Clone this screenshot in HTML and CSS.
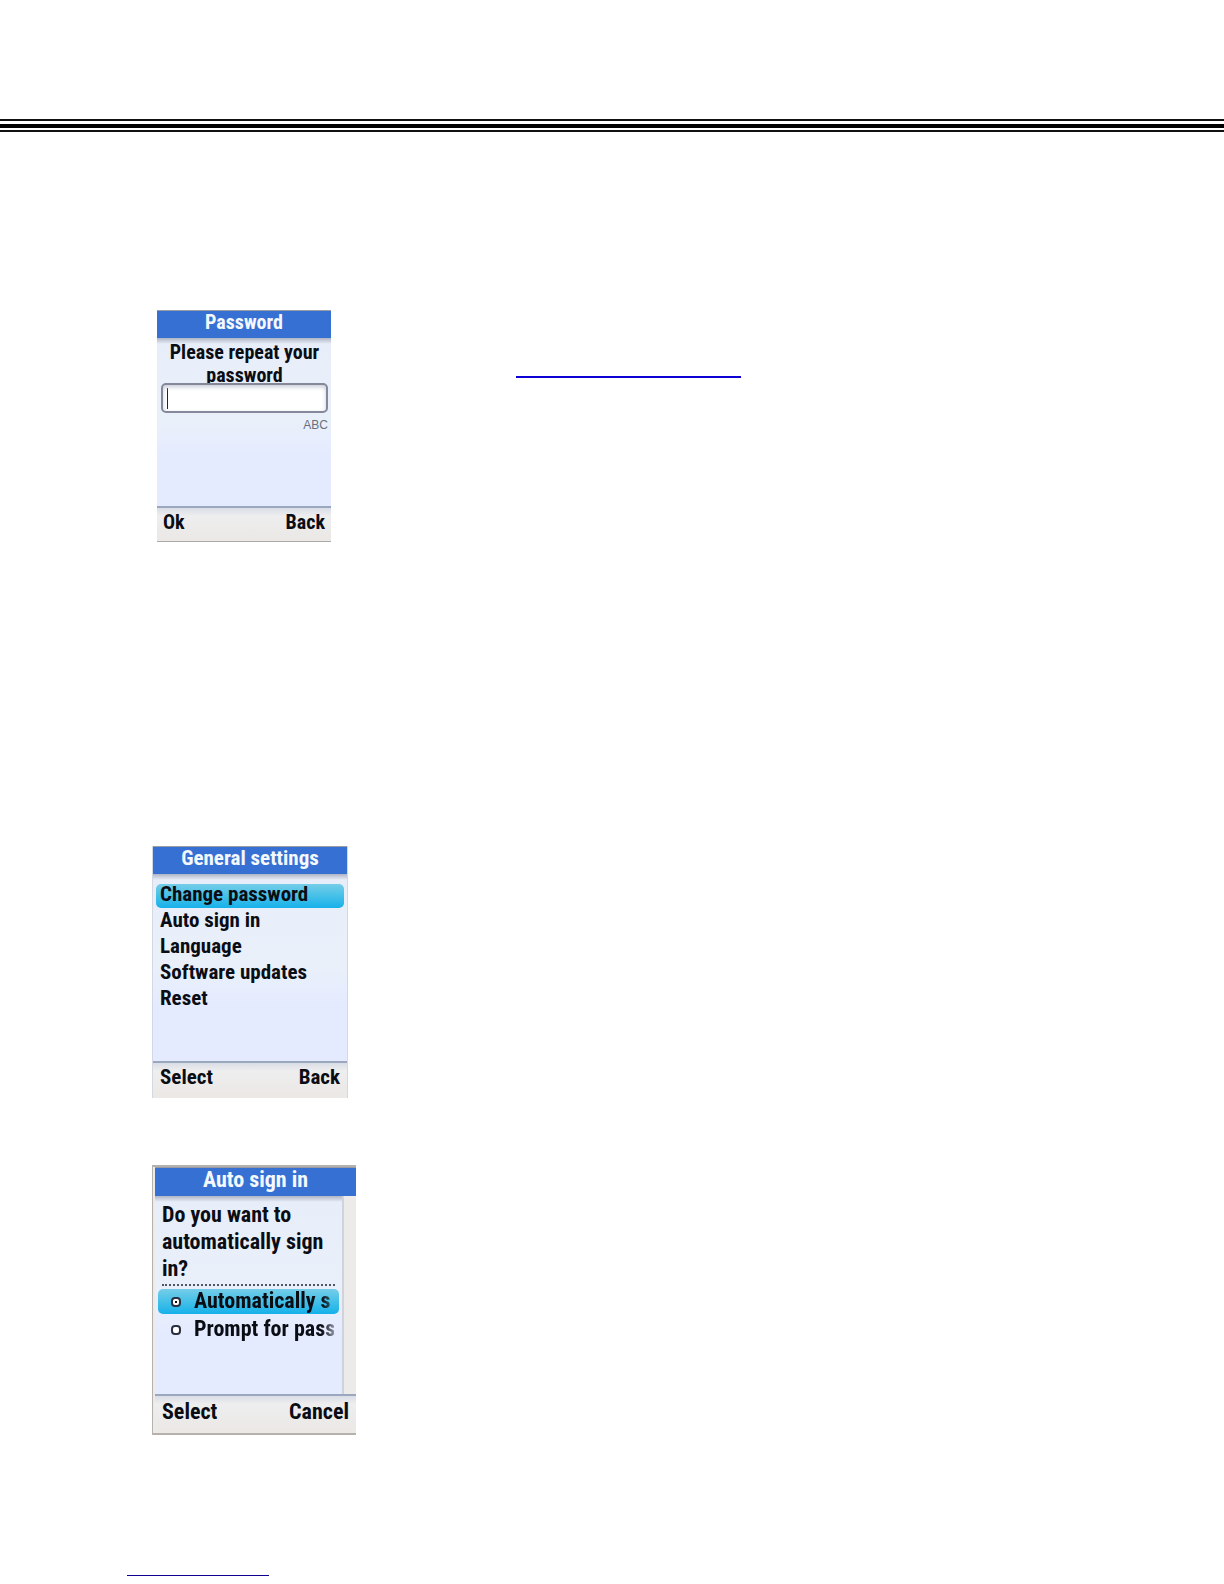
FILE: index.html
```html
<!DOCTYPE html>
<html lang="en">
<head>
<meta charset="utf-8">
<meta name="viewport" content="width=device-width, initial-scale=1">
<title>General settings</title>
<link rel="stylesheet" href="styles.css">
</head>
<body>
<header class="page-rule"></header>
<main class="content">
  <div class="row">
    <section class="phone phone-password">
      <h2 class="title">Password</h2>
      <form class="screen password-form">
        <label class="prompt" for="repeat">Please repeat your password</label>
        <input class="field" id="repeat" type="password">
        <span class="mode">ABC</span>
      </form>
      <footer class="softkeys"><button type="button">Ok</button><button type="button">Back</button></footer>
    </section>
    <a class="link" href="#settings" aria-label="General settings"></a>
  </div>

  <section class="phone phone-settings" id="settings">
    <h2 class="title">General settings</h2>
    <ul class="screen menu">
      <li><button class="selected" type="button">Change password</button></li>
      <li><button type="button">Auto sign in</button></li>
      <li><button type="button">Language</button></li>
      <li><button type="button">Software updates</button></li>
      <li><button type="button">Reset</button></li>
    </ul>
    <footer class="softkeys"><button type="button">Select</button><button type="button">Back</button></footer>
  </section>

  <section class="phone phone-signin">
    <h2 class="title">Auto sign in</h2>
    <form class="screen signin-form">
      <p class="question">Do you want to automatically sign in?</p>
      <label class="option selected"><input type="radio" name="signin" checked><span>Automatically s</span></label>
      <label class="option"><input type="radio" name="signin"><span>Prompt for pass</span></label>
    </form>
    <footer class="softkeys"><button type="button">Select</button><button type="button">Cancel</button></footer>
  </section>
</main>
<footer class="page-footer"><a class="footer-link" href="#top" aria-label="Back to top"></a></footer>
</body>
</html>
```
FILE: styles.css
```css
* { box-sizing: border-box; }

body {
  margin: 0;
  background: #fff;
  color: #0b0d14;
  font-family: "Roboto Condensed", Roboto, "Liberation Sans", sans-serif;
  font-size: 20px;
  font-weight: 700;
}

button {
  padding: 0;
  border: 0;
  background: none;
  color: inherit;
  font: inherit;
}

.page-rule {
  height: 13px;
  margin-top: 119px;
  border-top: 2px solid #111;
  border-bottom: 2px solid #111;
  background: linear-gradient(#000, #000) center / 100% 4px no-repeat;
}

.content { padding: 178px 0 0 152px; }

.row {
  display: flex;
  align-items: flex-start;
  padding-left: 5px;
}

.link {
  width: 225px;
  height: 68px;
  margin-left: 185px;
  border-bottom: 2px solid #0c00d2;
}

.phone {
  display: flex;
  flex-direction: column;
  background: #e5ebff;
}

.title {
  height: 28px;
  margin: 0;
  border-top: 1px solid #9a9da6;
  background: #3670d3;
  color: #f4f8ff;
  font-size: inherit;
  font-weight: inherit;
  line-height: 22px;
  text-align: center;
}

.screen {
  flex: 1;
  margin: 0;
  background: linear-gradient(#aeb5c4, #e8eef9 6px, #e9f0fa 50%, #e5ebff 70%);
}

.softkeys {
  display: flex;
  justify-content: space-between;
  height: 36px;
  padding: 0 7px;
  border-top: 2px solid #9ba7bf;
  background: linear-gradient(#d9dde6, #eeeeef 8px, #ebe8e5);
}

.softkeys button { height: 28px; }

.phone-password {
  width: 174px;
  height: 232px;
}

.password-form {
  display: flex;
  flex-direction: column;
  padding: 3px 3px 0 4px;
}

.prompt {
  line-height: 23px;
  text-align: center;
}

.field {
  width: 100%;
  height: 30px;
  margin-top: -4px;
  border: 2px solid #85879a;
  border-radius: 5px;
  background: linear-gradient(#222, #222) 4px 3px / 1px 21px no-repeat #fff;
  box-shadow: inset 0 2px 4px #c8cad6;
}

.mode {
  align-self: flex-end;
  color: #687080;
  font: 12px/24px "Liberation Sans", sans-serif;
}

.phone-password .softkeys {
  padding: 0 6px;
  border-bottom: 1px solid #aaa;
}

.phone-settings {
  width: 196px;
  height: 252px;
  margin-top: 304px;
  border: solid #d3d8e2;
  border-width: 0 1px;
  font-size: 21px;
}

.menu {
  padding: 8px 3px;
  list-style: none;
}

.menu li { height: 26px; }

.menu button {
  width: 100%;
  height: 24px;
  padding: 0 0 3px 4px;
  border-radius: 5px;
  line-height: 21px;
  text-align: left;
}

.selected { background: linear-gradient(#75cde8, #45c0e8 50%, #16b1ea); }

.phone-settings .softkeys { height: 37px; }

.phone-signin {
  width: 204px;
  height: 270px;
  margin-top: 67px;
  border: solid #b5b1ac;
  border-width: 2px 0 2px 1px;
  padding-left: 2px;
  background: #edebe9;
  font-size: 22px;
}

.phone-signin .title {
  height: 29px;
  line-height: 24px;
}

.signin-form {
  width: 189px;
  padding: 5px 3px;
  border-right: 2px solid #ced3dd;
}

.question {
  margin: 0 4px 3px;
  padding-bottom: 2px;
  border-bottom: 2px dotted #515665;
  line-height: 27px;
}

.option {
  display: flex;
  align-items: center;
  height: 25px;
  margin-bottom: 3px;
  padding: 0 5px 0 13px;
  border-radius: 5px;
}

.option input {
  flex: none;
  width: 10px;
  height: 10px;
  margin: 0 13px 0 0;
  border: 2px solid #2a3040;
  border-radius: 4px;
  background: #fff;
  appearance: none;
}

.option input:checked { background: linear-gradient(#111, #111) center / 2px 2px no-repeat #fff; }

.option span {
  overflow: hidden;
  padding-bottom: 2px;
  white-space: nowrap;
  mask-image: linear-gradient(to right, #000 128px, transparent 148px);
}

.phone-signin .softkeys { height: 39px; }

.phone-signin .softkeys button { height: 30px; }

.page-footer {
  margin-top: 139px;
  padding: 0 0 8px 127px;
}

.footer-link {
  display: block;
  width: 142px;
  height: 2px;
  border-bottom: 1px solid #100090;
}
```
